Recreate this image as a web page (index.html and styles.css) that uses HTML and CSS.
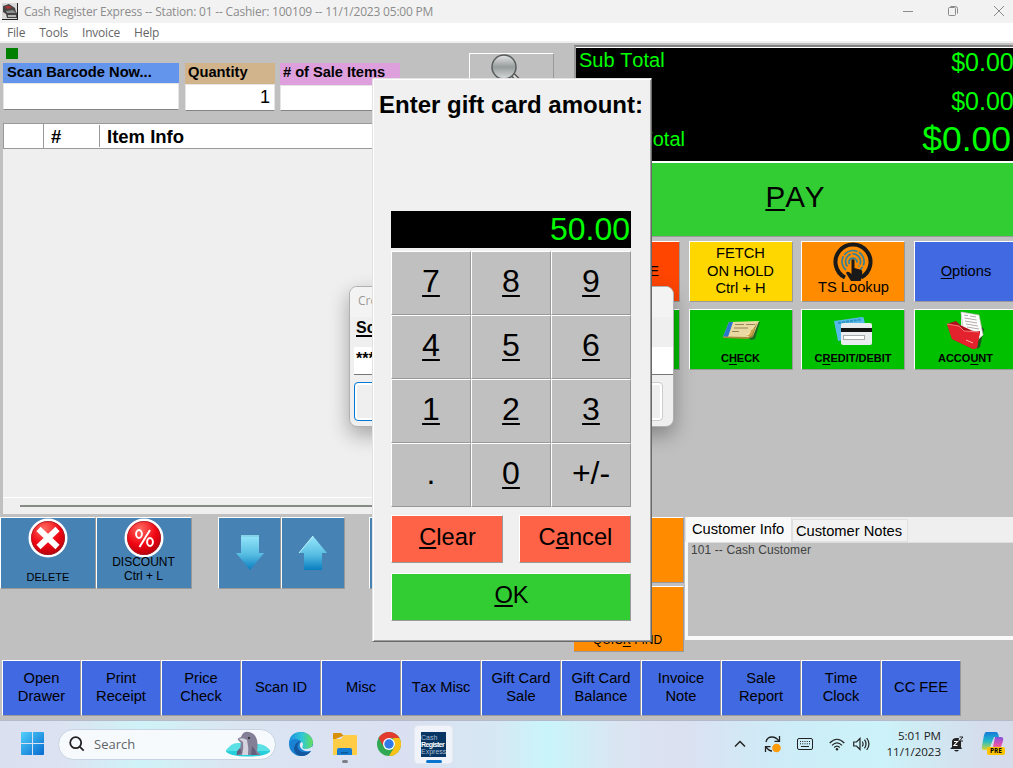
FILE: index.html
```html
<!DOCTYPE html>
<html lang="en">
<head>
<meta charset="utf-8">
<title>Cash Register Express</title>
<link rel="stylesheet" href="styles.css">
</head>
<body>
<div class="screen">
  <header class="titlebar">
    <svg class="app-icon" width="16" height="17" viewBox="0 0 16 17"><path d="M0 0h16v17H0z" fill="#d8d8d8"/><path d="M1 3l6-2 6 4 1 4 1 1v5H5l-1-4-3-2z" fill="#454545"/><path d="M3 3h5l2 2-5 1z" fill="#a33"/><path d="M4 8l7-1 3 3H5z" fill="#8d8d8d"/><path d="M6 12h8v2H6z" fill="#b5b5b5"/><path d="M0 16.5h16M15.5 0v17" stroke="#222"/></svg>
    <span class="title-text">Cash Register Express -- Station: 01 -- Cashier: 100109 -- 11/1/2023 05:00 PM</span>
    <svg class="win-controls" width="110" height="20" viewBox="0 0 110 20" fill="none" stroke="#8a8a8a"><path d="M0 9.500h10M45.500 6.500q0-1 1-1h5q1 0 1 1v6q0 1-1 1h-5q-1 0-1-1zM47.500 4.500h5q2 0 2 2v5M91 4l10 10M101 4l-10 10"/></svg>
  </header>
  <nav class="menubar"><span>File</span><span>Tools</span><span>Invoice</span><span>Help</span></nav>

  <main class="work">
    <section class="upper">
      <div class="sale">
        <div class="status"></div>
        <div class="entry-row">
          <div class="field barcode"><label>Scan Barcode Now...</label><div class="input"></div></div>
          <div class="field quantity"><label>Quantity</label><div class="input">1</div></div>
          <div class="field items"><label># of Sale Items</label><div class="input"></div></div>
          <div class="lookup"><svg width="40" height="40" viewBox="0 0 40 40"><defs><linearGradient id="lens" x2="0" y2="1"><stop stop-color="#e4e6e6"/><stop offset=".5" stop-color="#969c9b"/><stop offset="1" stop-color="#d6dada"/></linearGradient></defs><path d="M22 20l14 14" stroke="#555" stroke-width="5"/><path d="M22 20l14 14" stroke="#ddd" stroke-width="2"/><circle cx="14" cy="13" r="12" fill="url(#lens)" stroke="#595d5e" stroke-width="1.500"/></svg></div>
        </div>
        <div class="grid">
          <div class="grid-head"><span></span><span>#</span><span>Item Info</span></div>
          <div class="grid-body"></div>
          <div class="grid-scroll"><i></i></div>
        </div>
      </div>
      <div class="totals-side">
        <div class="totals">
          <div class="total-row sub"><span>Sub Total</span><b>$0.00</b></div>
          <div class="total-row tax"><span></span><b>$0.00</b></div>
          <div class="total-row grand"><span>Grand Total</span><b>$0.00</b></div>
        </div>
        <div class="pay"><span><u>P</u>AY</span></div>
        <div class="tiles">
          <div class="tile red"><span>INVOICE<br>Ctrl + I,</span></div>
          <div class="tile gold"><span>FETCH<br>ON HOLD<br>Ctrl + H</span></div>
          <div class="tile orange ts">
            <svg width="40" height="40" viewBox="0 0 40 40" fill="none"><path d="M12 35.500A17.500 17.500 0 1 1 28 35.500" stroke="#191919" stroke-width="4"/><g stroke="#318299" stroke-width="1.700"><path d="M13 28a11 11 0 1 1 14 0M14.500 24.500a7.500 7.500 0 1 1 11 0M16.500 22a4 4 0 1 1 7 0" stroke-dasharray="15 1.500"/></g><path d="M18.500 18q1.500-1.600 3 0v8l7 2q1 1 .7 4l-1.500 7H18l-5-8q1.500-3 5.500 1z" fill="#191919"/></svg>
            <span>TS Lookup</span>
          </div>
          <div class="tile blue"><span><u>O</u>ptions</span></div>
          <div class="tile green"></div>
          <div class="tile green pay-type">
            <svg width="40" height="30" viewBox="0 0 40 30"><path d="M8 7l31-1-5 17-4 1z" fill="#1d6b23"/><path d="M8 6l30-1-6 15-4 2-26-1z" fill="#ead9a2"/><path d="M8 6l4 0-5 15-5-.2z" fill="#2875d2"/><path d="M14 8.500l9 0M25 8.500h9M13 12h14M11 15.500h7" stroke="#94855a" fill="none"/><path d="M36.500 6l-5 15-5 2-24-1v-1.500l25 .5z" fill="#a98a3c"/><path d="M36 7q-6 5-8 14l-3-3q5-1 5-5z" fill="#f6e8b8"/><path d="M25 20q5-2 5-6l4-2-4 8z" fill="#c9a64a"/></svg>
            <span>C<u>H</u>ECK</span>
          </div>
          <div class="tile green pay-type">
            <svg width="40" height="30" viewBox="0 0 40 30"><path d="M1 5l28-4q2 0 2 2l3 17-29 5z" fill="#56b9e7"/><path d="M5 7l23-3.500" stroke="#2d92c6" stroke-width="2" stroke-dasharray="3 1"/><rect x="8" y="7" width="31" height="22" rx="2" fill="#e9edef"/><path d="M8 12h31v4H8z" fill="#141414"/><rect x="10.500" y="19.500" width="21" height="4" fill="#fff" stroke="#aaa"/></svg>
            <span>C<u>R</u>EDIT/DEBIT</span>
          </div>
          <div class="tile green pay-type">
            <svg width="40" height="38" viewBox="0 0 40 38"><path d="M34 14l4 4-4 18-3 2z" fill="#165a1a"/><path d="M15 1l14 3 8 20-8 8-14-14z" fill="#e9e4e4"/><path d="M15 1l18 3 4 20-5 4-15-12z" fill="#fff" stroke="#c8bcbc" stroke-width=".7"/><path d="M18 4l4 .7M24 5l6 1M18.500 7l12 2M19 10l12 2M20 13l12 2M21 16l12 2M26 20l8 1" stroke="#9d9292" stroke-width=".8"/><path d="M1 13l9-3 4 4 15 7 5-1-3 17-4 1L6 28z" fill="#b20f1a"/><path d="M1 13l12 2 5 5 16 1-3 16-4 1L6 28z" fill="#e3222e"/><path d="M1 13l12 2 5 5 15 1" stroke="#f77b80" fill="none"/><path d="M20 29l7 3" stroke="#ffabab"/></svg>
            <span>ACCO<u>U</u>NT</span>
          </div>
        </div>
      </div>
    </section>

    <section class="lower">
      <div class="actions">
        <div class="action delete"><svg width="40" height="40" viewBox="0 0 40 40"><use href="#badge"/><path d="M10.500 11l19 18M29.500 11l-19 18" stroke="#fff" stroke-width="6"/></svg><span>DELETE</span></div>
        <div class="action discount"><svg width="40" height="40" viewBox="0 0 40 40"><defs><radialGradient id="redball" cx=".4" cy=".25" r=".8"><stop stop-color="#ff6a60"/><stop offset=".55" stop-color="#f00512"/><stop offset="1" stop-color="#a8000b"/></radialGradient><g id="badge"><circle cx="20" cy="20" r="18.200" fill="url(#redball)" stroke="#fff" stroke-width="2.600"/><circle cx="20" cy="20" r="16.500" fill="none" stroke="#9e1e25" stroke-width=".7"/></g></defs><use href="#badge"/><g fill="none" stroke="#fff" stroke-width="2"><ellipse cx="15" cy="16" rx="2.900" ry="3.900"/><ellipse cx="26" cy="24" rx="2.900" ry="3.900"/><path d="M26 12l-10.500 17"/></g></svg><span>DISCOUNT<br>Ctrl + L</span></div>
      </div>
      <div class="arrows">
        <div class="action"><svg width="30" height="38" viewBox="0 0 30 38"><defs><linearGradient id="aqua" x2="0" y2="1"><stop stop-color="#96e7fb"/><stop offset=".55" stop-color="#58bde2"/><stop offset="1" stop-color="#087dc0"/></linearGradient></defs><path d="M6 1h18v18h5L15 36 1 19h5z" fill="url(#aqua)"/><path d="M6 2h18" stroke="#77c1d6"/></svg></div>
        <div class="action"><svg width="30" height="38" viewBox="0 0 30 38"><path d="M15 2l14 17h-5v17H6V19H1z" fill="url(#aqua)"/><path d="M1 19L15 2" stroke="#c4f5ff"/></svg></div>
      </div>
      <div class="action spare"></div>
      <div class="finders"><div></div><div><span>QUIC<u>K</u> FIND</span></div></div>
      <div class="customer">
        <div class="tabs"><span class="tab active">Customer Info</span><span class="tab">Customer Notes</span></div>
        <div class="customer-body">101 -- Cash Customer</div>
      </div>
    </section>

    <section class="functions">
      <div>Open<br>Drawer</div><div>Print<br>Receipt</div><div>Price<br>Check</div><div>Scan ID</div><div>Misc</div><div>Tax Misc</div><div>Gift Card<br>Sale</div><div>Gift Card<br>Balance</div><div>Invoice<br>Note</div><div>Sale<br>Report</div><div>Time<br>Clock</div><div>CC FEE</div>
    </section>
  </main>

  <footer class="taskbar">
    <svg class="start" width="24" height="24" viewBox="0 0 24 24"><defs><linearGradient id="win" x2="1" y2="1"><stop stop-color="#50d0fb"/><stop offset="1" stop-color="#0669cf"/></linearGradient></defs><path d="M1 0h10v11H0V1q0-1 1-1zM12 0h10q1 0 1 1v10H12zM0 12h11v11H1q-1 0-1-1zM12 12h11v10q0 1-1 1H12z" fill="url(#win)"/></svg>
    <div class="search">
      <svg width="16" height="16" viewBox="0 0 16 16" fill="none" stroke="#222" stroke-width="1.800"><circle cx="6.700" cy="6.700" r="5.500"/><path d="M10.700 10.700l4 4"/></svg>
      <span>Search</span>
      <svg class="dolphin" width="46" height="26" viewBox="0 0 46 26"><ellipse cx="23" cy="20" rx="22" ry="5.500" fill="#25cfdc"/><path d="M1 20q5-9 13-8l20 1q8 1 11 7z" fill="#5be0e6"/><path d="M11 24q4-2 5-12l-3-3q-1-2 3-3 2-6 8-5 6 1 8 8 1 5 0 11l4 4H17z" fill="#837f96"/><path d="M14 8q4-2 8 1 2 8 1 15h-6q2-7 1-13z" fill="#d5d3df"/><path d="M12 24q-1-4 3-7l2 5zM27 15q4 4 5 9h-6z" fill="#655f7c"/><circle cx="24" cy="7" r="1" fill="#222"/></svg>
    </div>
    <svg class="edge" width="24" height="24" viewBox="0 0 24 24"><defs><linearGradient id="edgeTop" x2="1"><stop stop-color="#1b8fe0"/><stop offset=".55" stop-color="#31c7d6"/><stop offset="1" stop-color="#65df55"/></linearGradient></defs><circle cx="12" cy="12" r="12" fill="#1a82d4"/><path d="M0 11Q1 0 12 0q11 1 12 11-1 6-8 6-4 0-3-3 1-4-3-6-6-3-10 3z" fill="url(#edgeTop)"/><path d="M12 9q-6 4-2 9 4 4 12 1-3 5-10 5Q5 23 5 16q1-6 7-7z" fill="#14579f"/><path d="M12 10q2 0 2 3-2 4 2 4 5 0 8-3.500l-1 5q-6 2-10-1-4-4-1-7.500z" fill="#e0e8f5"/></svg>
    <div class="folder"><svg width="24" height="22" viewBox="0 0 24 22"><path d="M0 1q0-1 1-1h7l3 3h-1L0 7z" fill="#d99009"/><path d="M0 6h8l3-4h12q1 0 1 1v19H1q-1 0-1-1z" fill="#ffcc45"/><path d="M4 22v-5q0-2 2-2h11q2 0 2 2v5z" fill="#137bd0"/><path d="M8 19h7v1.500H8z" fill="#085998"/></svg><i></i></div>
    <svg class="chrome" width="24" height="24" viewBox="0 0 24 24"><circle cx="12" cy="12" r="12" fill="#31a853"/><path d="M1.600 6A12 12 0 0 1 22.400 6H12z" fill="#e33b2e"/><path d="M1.600 6L7 15l5-9z" fill="#e33b2e"/><path d="M22.400 6A12 12 0 0 1 12 24l6-10-2-8z" fill="#fbc116"/><circle cx="12" cy="12" r="6" fill="#fff"/><circle cx="12" cy="12" r="4.700" fill="#3079e9"/></svg>
    <div class="running"><div class="cre"><span>Cash</span><b>Register</b><span>Express</span></div><i></i></div>
    <div class="tray">
      <svg width="12" height="8" viewBox="0 0 12 8" fill="none" stroke="#222" stroke-width="1.500"><path d="M1 6.500l5-5 5 5"/></svg>
      <svg width="18" height="18" viewBox="0 0 18 18" fill="none" stroke="#222" stroke-width="1.300"><path d="M2 7Q3 2 8 2q4 0 7 4M15.500 1v5.300h-5M1.500 17v-5.300h5M2 12q3 4 6 4"/><circle cx="12.500" cy="13" r="4.300" fill="#fe9b08" stroke="none"/></svg>
      <svg width="16" height="12" viewBox="0 0 16 12" fill="none" stroke="#222"><rect x=".5" y=".5" width="15" height="11" rx="1.500"/><path d="M3 3.500h10M3 5.800h10" stroke-dasharray="1 1.250"/><path d="M4 8.500h8"/></svg>
      <svg width="16" height="13" viewBox="0 0 16 13" fill="none" stroke="#222" stroke-width="1.200"><path d="M.7 5Q8-2.500 15.300 5M3 7.300q5-5 10 0M5.200 9.500q2.800-2.700 5.600 0"/><circle cx="8" cy="11.300" r="1.200" fill="#222" stroke="none"/></svg>
      <svg width="17" height="14" viewBox="0 0 17 14" fill="none" stroke="#222" stroke-width="1.200"><path d="M.7 5h2.800L7 1.500v11L3.500 9H.7zM9.200 4.500q1.800 2.500 0 5M11.500 2.700q3 4.300 0 8.600M13.700 1q4.500 6 0 12"/></svg>
      <div class="clock">5:01 PM<br>11/1/2023</div>
      <svg width="14" height="16" viewBox="0 0 14 16"><path d="M2 11V6q0-4 4.500-4H9l-.5 3H11v6l1 2H0z" fill="#222"/><path d="M4 14h5q-2.500 3-5 0z" fill="#222"/><path d="M4 5.500h3.500L4 9.500h3.500" fill="none" stroke="#fff" stroke-width="1.100"/><path d="M9.500 1h3.500L9.500 5h3.500" fill="none" stroke="#222"/></svg>
      <div class="copilot"><svg width="23" height="20" viewBox="0 0 23 20"><defs><linearGradient id="cpA" x2="0" y2="1"><stop stop-color="#147bda"/><stop offset=".5" stop-color="#21b9ca"/><stop offset="1" stop-color="#d6d832"/></linearGradient><linearGradient id="cpB" x2="0" y2="1"><stop stop-color="#8750df"/><stop offset=".55" stop-color="#e654a8"/><stop offset="1" stop-color="#ffb053"/></linearGradient></defs><path d="M5 0h10q2 0 3 5h-5l-4 10q-1 3-4 3H3q-3 0-2-4L3 3q1-3 2-3z" fill="url(#cpA)"/><path d="M14 5h6q3 0 2 4l-3 9q-1 2-4 2H9q2-1 3-5z" fill="url(#cpB)"/></svg><b>PRE</b></div>
    </div>
  </footer>

  <div class="prompt">
    <div class="prompt-title">Cre</div>
    <div class="prompt-label"><u>Scan</u></div>
    <div class="prompt-input">********</div>
    <div class="prompt-buttons"><div class="primary"></div><div></div></div>
  </div>

  <div class="keypad-dialog">
    <h1>Enter gift card amount:</h1>
    <div class="display">50.00</div>
    <div class="keys">
      <div><u>7</u></div><div><u>8</u></div><div><u>9</u></div>
      <div><u>4</u></div><div><u>5</u></div><div><u>6</u></div>
      <div><u>1</u></div><div><u>2</u></div><div><u>3</u></div>
      <div>.</div><div><u>0</u></div><div class="sign">+/-</div>
    </div>
    <div class="commands"><div><span><u>C</u>lear</span></div><div><span>C<u>a</u>ncel</span></div></div>
    <div class="ok"><span><u>O</u>K</span></div>
  </div>
</div>
</body>
</html>
```
FILE: styles.css
```css
* { box-sizing: border-box; }
body { margin: 0; font-family: "Liberation Sans", Arial, sans-serif; font-kerning: none; color: #000; overflow: hidden; }
svg { display: block; flex: none; }
u { text-decoration-thickness: 1px; text-underline-offset: 2px; text-decoration-skip-ink: none; }
.screen { position: relative; width: 1013px; height: 768px; overflow: hidden; display: flex; flex-direction: column; background: #c0c0c0; }

.titlebar { height: 23px; flex: none; background: #f2f2f2; display: flex; align-items: center; padding: 0 8px 0 2px; color: #8c8c8c; }
.title-text { font: 12px/22px "Open Sans", sans-serif; letter-spacing: -.2px; margin-left: 6px; flex: 1; white-space: nowrap; }
.win-controls { margin-right: -8px; }
.menubar { height: 20px; flex: none; background: #fff; border-bottom: 2px solid #efefef; display: flex; gap: 14px; padding-left: 7px; color: #666; font: 12px/19px "Open Sans", sans-serif; letter-spacing: -.2px; }

.work { height: 677px; flex: none; }
.upper { height: 474px; display: grid; grid-template-columns: 574px 439px; }
.status { width: 12px; height: 11px; background: #008000; margin: 5px 0 0 6px; }
.entry-row { display: flex; height: 64px; padding-left: 3px; align-items: flex-start; }
.field { margin-top: 4px; }
.field label { display: block; padding-left: 4px; font: bold 14.700px/18px "Liberation Sans", Arial, sans-serif; white-space: nowrap; }
.input { height: 27px; background: #fff; border: 1px solid #e4e4e4; border-bottom-color: #858585; text-align: right; padding-right: 4px; font-size: 18px; line-height: 25px; }
.barcode { width: 176px; margin-right: 6px; }
.barcode label { background: #6495ed; height: 20px; }
.quantity { width: 90px; margin-right: 5px; }
.quantity label { background: #d2b48c; height: 21px; padding-left: 3px; }
.items { width: 120px; margin-right: 69px; }
.items label { background: #dda0dd; height: 22px; padding-left: 3px; letter-spacing: -.05px; }
.items .input { height: 26px; }
.lookup { width: 85px; height: 60px; margin-top: -6px; border: 1px solid #fff; border-right-color: #999; padding-left: 20px; }
.grid { width: 568px; height: 391px; margin-left: 3px; background: #efefef; }
.grid-head { height: 26px; background: #fff; border: 1px solid #999; display: flex; font: bold 18.500px/26px "Liberation Sans", Arial, sans-serif; }
.grid-head span:nth-child(1) { width: 40px; border-right: 1px solid #999; }
.grid-head span:nth-child(2) { width: 56px; padding-left: 7px; margin: 1px 0; line-height: 24px; border-right: 1px solid #999; }
.grid-head span:nth-child(3) { padding-left: 7px; }
.grid-body { height: 348px; }
.grid-scroll { height: 17px; border-top: 1px solid #fff; padding: 7px 0 0 17px; }
.grid-scroll i { display: block; height: 2px; background: #858a85; }

.totals { height: 118px; margin-top: 2px; background: #000; border-top: 2px solid #808080; border-left: 2px solid #999; border-bottom: 2px solid #fff; box-shadow: inset 0 1px #fff; color: #0f0; padding-left: 3px; }
.total-row { display: flex; justify-content: space-between; }
.total-row b { font-weight: normal; font-size: 25px; }
.sub b, .tax b { margin-right: -.700px; }
.total-row span { font-size: 20px; }
.sub { height: 38px; line-height: 30px; }
.sub span { line-height: 27px; }
.tax { height: 34px; line-height: 32px; }
.grand { height: 40px; line-height: 40px; padding-right: 2px; }
.grand b { font-size: 35.500px; }
.grand span { width: 106px; text-align: right; white-space: nowrap; line-height: 40px; direction: rtl; }
.pay { height: 74px; background: #32cd32; border-bottom: 1px solid #999; display: grid; place-items: center; font-size: 29.600px; padding: 0 0 5px 3px; }
.pay u { text-decoration-thickness: 2px; text-underline-offset: 2px; }
.tiles { display: grid; grid-template-columns: 104px 104px 104px 104px; column-gap: 8.500px; row-gap: 7px; padding: 4px 0 0 2px; }
.tile { height: 61px; border: 1px solid #fff; border-right-color: #999; border-bottom-color: #999; display: flex; flex-direction: column; align-items: center; justify-content: center; text-align: center; font-size: 14.700px; line-height: 17.500px; }
.red { background: #ff4500; align-items: flex-end; padding: 17px 20px 0 0; }
.gold { background: #ffd700; }
.orange { background: #ff8c00; }
.blue { background: #4169e1; padding-left: 1px; }
.green { background: #00c000; }
.ts { justify-content: flex-start; }
.ts span { margin-top: -3px; margin-left: 1px; line-height: 17px; }
.pay-type { justify-content: space-between; font: bold 11px/14px "Liberation Sans", Arial, sans-serif; padding: 6px 0 4px; }
.pay-type:last-child { padding-top: 1px; }

.lower { height: 143px; display: flex; align-items: flex-start; }
.actions { display: grid; grid-template-columns: 96px 96px; margin-right: 26px; }
.action { height: 72px; background: #4682b4; border: 1px solid #fff; border-right-color: #999; border-bottom-color: #999; display: flex; flex-direction: column; align-items: center; text-align: center; font-size: 12px; line-height: 14px; }
.delete { font-size: 11px; justify-content: space-between; padding-bottom: 4px; }
.discount { padding-right: 1px; }
.discount span { margin-top: -3px; }
.arrows { display: grid; grid-template-columns: 63px 64px; margin-right: 24px; }
.arrows .action { justify-content: center; }
.spare { width: 120px; margin-right: 85px; }
.finders { width: 110px; margin-right: 1px; }
.finders div { height: 66px; background: #ff8c00; border: solid #999; border-width: 0 1px 1px 0; border-top: 1px solid #fff; margin-bottom: 3px; display: flex; justify-content: center; align-items: flex-end; font-size: 12px; padding: 0 2px 4px 0; }
.customer { width: 328px; height: 123px; background: #f9f9f9; border-bottom: 3px solid #f9f9f9; padding-left: 3px; }
.tabs { height: 25px; display: flex; align-items: flex-end; background: #efefef; margin-left: -3px; font-size: 14.700px; }
.tab { background: #f2f2f2; border: 1px solid #e0e0e0; width: 116px; height: 23px; line-height: 23px; padding-left: 3px; white-space: nowrap; }
.tab.active { background: #f9f9f9; width: 107px; height: 25px; line-height: 23px; padding-left: 6px; border-bottom: 0; border-top-color: #f9f9f9; }
.customer-body { height: 94px; background: #c0c0c0; border-top: 1px solid #ddd; color: #404040; font-size: 12px; letter-spacing: .1px; line-height: 14px; padding-left: 3px; }
.functions { display: grid; grid-template-columns: 79px repeat(11, 80px); margin-left: 2px; }
.functions div { height: 56px; background: #4169e1; border: 1px solid #fff; border-right-color: #999; border-bottom-color: #999; display: grid; place-content: center; text-align: center; font-size: 14.700px; line-height: 18px; padding-bottom: 2px; }

.taskbar { height: 48px; flex: none; border-top: 1px solid #b5bac8; background: linear-gradient(90deg, #dbe0f0 0, #dce2f1 6%, #cff3f8 14%, #dbe5f2 23%, #dae0f1 40%, #d6e8f4 49%, #c9f5fa 54%, #dae5f2 61%, #dce0f1 67%, #cdecf7 77%, #ccf3f9 87%, #d5ddec 97%, #d6dbea); display: flex; align-items: center; font-family: "Open Sans", sans-serif; padding-bottom: 1px; }
.start { margin-left: 21px; }
.search { width: 218px; height: 31px; margin-left: 13px; border-radius: 16px; background: #f7fafd; border: 1px solid #c8d4e2; display: flex; align-items: center; padding: 0 4px 0 10px; color: #606468; font-size: 13px; }
.search span { margin-left: 9px; flex: 1; }
.edge { margin-left: 13px; }
.folder { margin-left: 20px; padding-top: 8px; height: 40px; width: 24px; margin-top: 2px; }
.folder i { display: block; width: 6px; height: 3px; border-radius: 2px; background: #7d8087; margin: 5px auto 0; }
.chrome { margin-left: 20px; }
.running { margin-left: 13px; width: 39px; height: 39px; background: #f0f4fa; border: 1px solid #e4e8f0; border-radius: 4px; padding: 6px 6px 0; }
.cre { width: 25px; height: 25px; background: #073664; color: #a9bdd0; font: 7px/7px "Liberation Sans", Arial, sans-serif; padding-top: 2px; overflow: hidden; }
.cre span, .cre b { display: block; }
.cre b { color: #fff; letter-spacing: -.6px; }
.running i { display: block; width: 16px; height: 3px; border-radius: 2px; background: #0874ce; margin: 3px auto 0; }
.tray { margin-left: auto; display: flex; align-items: center; padding-right: 8px; }
.tray svg:nth-child(2) { margin-left: 18px; }
.tray svg:nth-child(3) { margin-left: 15px; }
.tray svg:nth-child(4) { margin-left: 16px; }
.tray svg:nth-child(5) { margin-left: 8px; }
.clock { width: 71px; text-align: right; font-size: 11.600px; letter-spacing: -.05px; line-height: 16px; color: #222; }
.clock + svg { margin-left: 9px; }
.tray .copilot svg { margin-left: 0; }
.copilot { width: 24px; height: 24px; margin-left: 17px; }
.copilot b { display: block; width: 18px; height: 8px; margin: -5px 0 0 6px; position: relative; border-radius: 2px; background: #ffc400; font: bold 6.500px/8px "Open Sans", sans-serif; text-align: center; }

.prompt { position: absolute; left: 349px; top: 286px; width: 325px; height: 141px; border: 1px solid #b0b0b0; border-radius: 8px; background: #efefef; overflow: hidden; box-shadow: 0 8px 20px rgba(0,0,0,.32); }
.prompt { padding-left: 4px; }
.prompt-title { height: 30px; margin-left: -4px; background: #f3f3f3; color: #999; font: 12px/28px "Open Sans", sans-serif; padding-left: 8px; }
.prompt-label { height: 30px; padding: 1px 0 0 2px; font: bold 16px/20px "Liberation Sans", Arial, sans-serif; }
.prompt-label u { text-decoration-thickness: 2px; }
.prompt-input { height: 28px; background: #fff; border-bottom: 1px solid #777; font: bold 16px/23px "Liberation Sans", Arial, sans-serif; padding-left: 2px; }
.prompt-buttons { display: grid; grid-template-columns: 150px 150px; justify-content: space-between; padding: 7px 10px 0 0; }
.prompt-buttons div { height: 39px; border: 1px solid #ccc; border-radius: 4px; box-shadow: inset 0 0 0 2px #fff; }
.prompt-buttons .primary { border-color: #0078d4; }

.keypad-dialog { position: absolute; left: 372px; top: 78px; width: 280px; height: 564px; background: #f0f0f0; border: 1px solid #e3e3e3; border-right-color: #696969; border-bottom-color: #696969; box-shadow: inset 1px 1px #fff, inset -1px -1px #a0a0a0; padding: 10px 20px 0 18px; }
.keypad-dialog h1 { height: 122px; margin: 0 -14px 0 -12px; font: bold 24px/32px "Liberation Sans", Arial, sans-serif; white-space: nowrap; }
.display { width: 240px; height: 37px; background: #000; color: #0f0; text-align: right; font-size: 32px; line-height: 36px; padding-right: 1px; }
.keys { display: grid; width: 240px; grid-template-columns: repeat(3, 80px); grid-auto-rows: 64px; margin-top: 3px; }
.keys div, .commands div, .ok { border: 1px solid #fff; border-right-color: #999; border-bottom-color: #999; display: grid; place-content: center; }
.keys div { background: #c0c0c0; font-size: 32px; padding-bottom: 4px; }
.keys u { text-decoration-thickness: 2px; text-underline-offset: 3px; }
.keys .sign { font-size: 32px; }
.commands { width: 240px; display: grid; grid-template-columns: 112px 112px; justify-content: space-between; margin-top: 8px; }
.commands div, .ok { height: 48px; font-size: 23.700px; background: #ff6347; padding: 0 0 3px 1px; }
.commands u, .ok u { text-decoration-thickness: 2px; }
.ok { width: 240px; background: #32cd32; margin-top: 10px; }
```
